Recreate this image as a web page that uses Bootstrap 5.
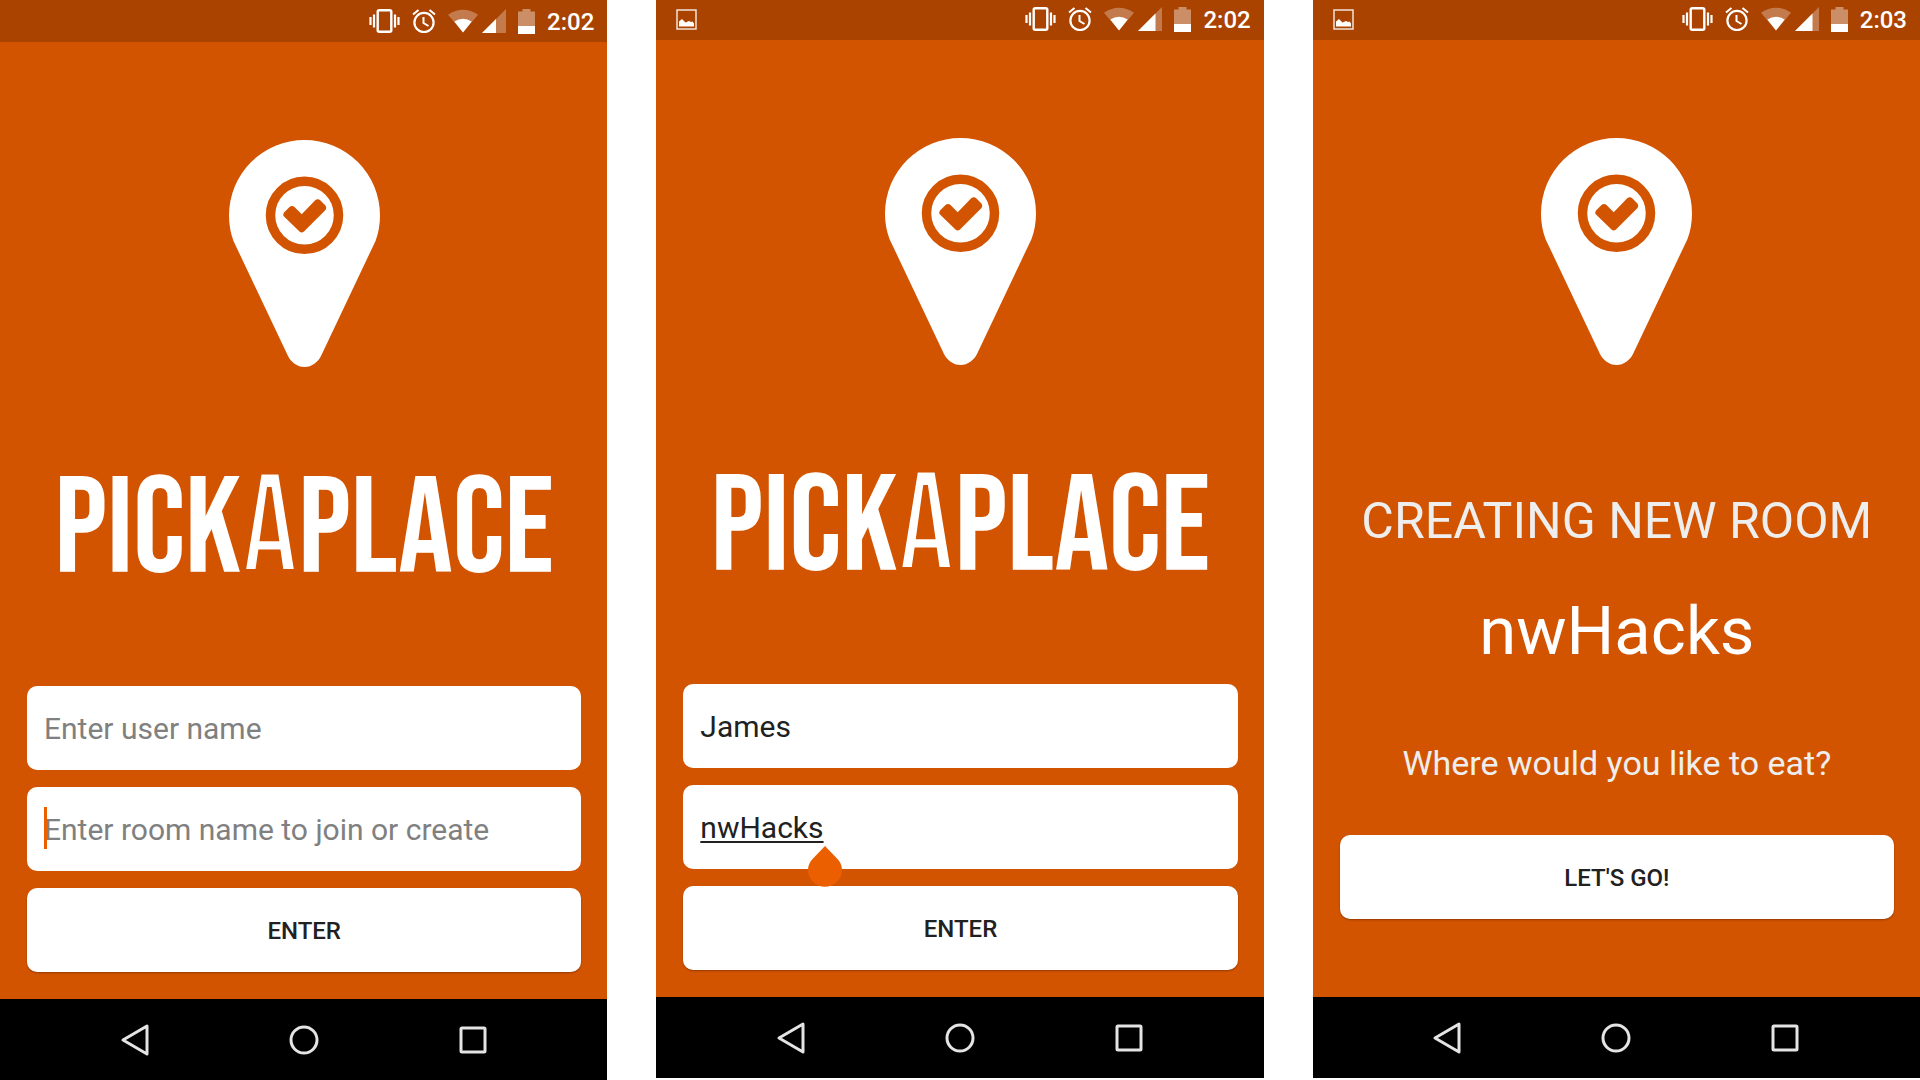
<!DOCTYPE html>
<html lang="en">
<head>
<meta charset="utf-8">
<meta name="viewport" content="width=device-width, initial-scale=1">
<title>PickAPlace</title>
<link href="https://cdn.jsdelivr.net/npm/bootstrap@5.3.0/dist/css/bootstrap.min.css" rel="stylesheet">
<style>
  body { font-family: Roboto, "Liberation Sans", sans-serif; background: #fff; }
  .gallery { gap: 49px; min-height: 100vh; }
  .phone { flex: 1 1 0; min-width: 0; background: #d35400; color: #fff; }
  .phone-raised { margin-top: -2px; margin-bottom: 2px; }
  .status-bar { height: 42px; padding: 0 13px 0 20px; background: #aa4300; font-size: 24px; line-height: 28px; font-weight: 500; }
  .status-bar svg { display: block; flex: none; }
  .status-icons { gap: 12px; }
  .clock { padding-top: 2px; }
  .screen { padding: 98px 26px 27px 27px; }
  .screen-room { padding-bottom: 78px; }
  .wordmark { font-family: "Bebas Neue", "Roboto Condensed", "Liberation Sans Narrow", Roboto, sans-serif; font-weight: 400; font-size: 136px; line-height: 140px; margin: 92px 0 0; white-space: nowrap; }
  .wordmark span { font-size: 142px; line-height: 1; -webkit-text-stroke: 5px #d35400; }
  .stack { gap: 17px; }
  .field, .action { height: 84px; border: 0; border-radius: 10px; background: #fff; color: #212121; }
  .field { padding: 0 17px; font-size: 30px; line-height: 40px; }
  .field:focus { color: #212121; box-shadow: none; }
  .field::placeholder { color: #808080; opacity: 1; }
  .composing { text-decoration: underline; text-decoration-thickness: 2px; text-underline-offset: 3px; }
  .action { padding: 8px 12px 6px; font-size: 24px; line-height: 28px; font-weight: 500; box-shadow: 0 1px 2px rgba(0, 0, 0, .3); }
  .action:hover { background: #fff; color: #212121; }
  .caret-bar { position: absolute; left: 17px; top: 20px; width: 3px; height: 42px; background: #ec5f00; }
  .drop-handle { position: absolute; left: 125px; top: 61px; z-index: 2; }
  .room-note { color: #eee; font-size: 50px; line-height: 60px; margin: 126px 0 0; }
  .room-title { font-size: 67px; line-height: 80px; font-weight: 400; margin: 40px 0 0; }
  .room-ask { color: #eee; font-size: 34px; line-height: 40px; margin: 0 0 52px; }
  .nav-bar { height: 81px; padding: 0 50px; background: #000; }
  .nav-bar button { flex: 1 1 0; height: 81px; padding: 0; border: 0; background: none; }
  .nav-bar svg { display: block; margin: 0 auto; }
</style>
</head>
<body>
<svg width="0" height="0" class="position-absolute" aria-hidden="true">
  <defs>
    <symbol id="i-picture" viewBox="0 0 21 21"><rect x="1" y="1" width="19" height="19" fill="none" stroke="#fff" stroke-opacity=".85" stroke-width="1.500"/><path d="M3 17.500v-5l3-2.500 3.500 3.500 3.500-1.500 2 1 1.500-.5 1.500 2v3z" fill="#fff"/></symbol>
    <symbol id="i-vibrate" viewBox="0 0 31 24"><rect x="8.700" y="1.200" width="13.600" height="21.600" rx="1.500" fill="none" stroke="#fff" stroke-width="2.400"/><path d="M1.500 8v8M5 5.500v13M26 5.500v13M29.500 8v8" stroke="#fff" stroke-width="2.200"/></symbol>
    <symbol id="i-alarm" viewBox="0 0 24 24"><circle cx="12" cy="13.500" r="9.600" fill="none" stroke="#fff" stroke-width="2.200"/><path d="M11.500 8v6l5 3M1 5.500L6.500 1M23 5.500L17.500 1" fill="none" stroke="#fff" stroke-width="2"/></symbol>
    <symbol id="i-wifi" viewBox="0 0 31 24"><path d="M15.500 24L0 5.500Q15.500-5 31 5.500z" fill="#fff" fill-opacity=".3"/><path d="M15.500 24L6.500 12.500Q15.500 7 24.500 12.500z" fill="#fff"/></symbol>
    <symbol id="i-signal-low" viewBox="0 0 24 24"><path d="M24 0v24H0z" fill="#fff" fill-opacity=".3"/><path d="M14 10v14H0z" fill="#fff"/></symbol>
    <symbol id="i-signal-high" viewBox="0 0 24 24"><path d="M24 0v24H0z" fill="#fff" fill-opacity=".3"/><path d="M17.500 6.500V24H0z" fill="#fff"/></symbol>
    <symbol id="i-battery" viewBox="0 0 17 25"><path d="M0 2.500h4.500V0h8v2.500H17V17H0z" fill="#fff" fill-opacity=".4"/><path d="M0 17h17v8H0z" fill="#fff"/></symbol>
    <symbol id="i-pin" viewBox="0 0 151 227"><path d="M75.500 0A75.500 75.500 0 0 0 0 75.500Q0 89 4.500 101L59 216C62 222 68 227 75.500 227S89 222 92 216L146.500 101Q151 89 151 75.500A75.500 75.500 0 0 0 75.500 0z" fill="#fff"/><circle cx="75.500" cy="75.300" r="34" fill="none" stroke="#d35400" stroke-width="9.500"/><path d="M55 72.500L60.500 67Q63 65 65.500 67L72.700 74.300L86 60.500Q88.700 58 91.500 60.500L96 65Q98.500 68 96 70.500L75 91.500Q72.700 93.500 70.500 91.500L55 76.500Q53.500 74.500 55 72.500z" fill="#d35400"/></symbol>
    <symbol id="i-back" viewBox="0 0 32 34"><path d="M28 3v28L4 17z" fill="none" stroke="#e4e4e4" stroke-width="3" stroke-linejoin="round"/></symbol>
    <symbol id="i-home" viewBox="0 0 32 34"><circle cx="16" cy="17" r="13" fill="none" stroke="#e4e4e4" stroke-width="3"/></symbol>
    <symbol id="i-recent" viewBox="0 0 32 34"><rect x="4" y="5" width="24" height="24" rx="1" fill="none" stroke="#e4e4e4" stroke-width="3"/></symbol>
  </defs>
</svg>

<main class="gallery d-flex">
  <section class="phone d-flex flex-column">
    <header class="status-bar d-flex align-items-center justify-content-end">
      <div class="status-icons d-flex align-items-center">
        <svg width="31" height="24"><use href="#i-vibrate"/></svg>
        <svg width="24" height="24"><use href="#i-alarm"/></svg>
        <div class="d-flex gap-1"><svg width="30" height="24"><use href="#i-wifi"/></svg><svg width="24" height="24"><use href="#i-signal-low"/></svg></div>
        <svg width="17" height="25"><use href="#i-battery"/></svg>
        <span class="clock">2:02</span>
      </div>
    </header>
    <div class="screen d-flex flex-column flex-grow-1 text-center">
      <svg class="mx-auto d-block flex-shrink-0" width="151" height="227"><use href="#i-pin"/></svg>
      <h1 class="wordmark">PICK<span>A</span>PLACE</h1>
      <form class="stack d-flex flex-column mt-auto">
        <input class="form-control field" type="text" aria-label="User name" placeholder="Enter user name">
        <div class="position-relative">
          <input class="form-control field" type="text" aria-label="Room name" placeholder="Enter room name to join or create">
          <span class="caret-bar"></span>
        </div>
        <button class="btn action w-100" type="button">ENTER</button>
      </form>
    </div>
    <nav class="nav-bar d-flex">
      <button type="button" aria-label="Back"><svg width="32" height="34"><use href="#i-back"/></svg></button>
      <button type="button" aria-label="Home"><svg width="32" height="34"><use href="#i-home"/></svg></button>
      <button type="button" aria-label="Recent apps"><svg width="32" height="34"><use href="#i-recent"/></svg></button>
    </nav>
  </section>

  <section class="phone phone-raised d-flex flex-column">
    <header class="status-bar d-flex align-items-center justify-content-between">
      <svg width="21" height="21"><use href="#i-picture"/></svg>
      <div class="status-icons d-flex align-items-center">
        <svg width="31" height="24"><use href="#i-vibrate"/></svg>
        <svg width="24" height="24"><use href="#i-alarm"/></svg>
        <div class="d-flex gap-1"><svg width="30" height="24"><use href="#i-wifi"/></svg><svg width="24" height="24"><use href="#i-signal-high"/></svg></div>
        <svg width="17" height="25"><use href="#i-battery"/></svg>
        <span class="clock">2:02</span>
      </div>
    </header>
    <div class="screen d-flex flex-column flex-grow-1 text-center">
      <svg class="mx-auto d-block flex-shrink-0" width="151" height="227"><use href="#i-pin"/></svg>
      <h1 class="wordmark">PICK<span>A</span>PLACE</h1>
      <form class="stack d-flex flex-column mt-auto">
        <input class="form-control field" type="text" aria-label="User name" value="James">
        <div class="position-relative">
          <input class="form-control field composing" type="text" aria-label="Room name" value="nwHacks" spellcheck="false">
          <svg class="drop-handle" width="34" height="41" viewBox="0 0 34 41"><path d="M17 0L29 12.500A17 16.500 0 1 1 5 12.500z" fill="#ec5f00"/></svg>
        </div>
        <button class="btn action w-100" type="button">ENTER</button>
      </form>
    </div>
    <nav class="nav-bar d-flex">
      <button type="button" aria-label="Back"><svg width="32" height="34"><use href="#i-back"/></svg></button>
      <button type="button" aria-label="Home"><svg width="32" height="34"><use href="#i-home"/></svg></button>
      <button type="button" aria-label="Recent apps"><svg width="32" height="34"><use href="#i-recent"/></svg></button>
    </nav>
  </section>

  <section class="phone phone-raised d-flex flex-column">
    <header class="status-bar d-flex align-items-center justify-content-between">
      <svg width="21" height="21"><use href="#i-picture"/></svg>
      <div class="status-icons d-flex align-items-center">
        <svg width="31" height="24"><use href="#i-vibrate"/></svg>
        <svg width="24" height="24"><use href="#i-alarm"/></svg>
        <div class="d-flex gap-1"><svg width="30" height="24"><use href="#i-wifi"/></svg><svg width="24" height="24"><use href="#i-signal-high"/></svg></div>
        <svg width="17" height="25"><use href="#i-battery"/></svg>
        <span class="clock">2:03</span>
      </div>
    </header>
    <div class="screen screen-room d-flex flex-column flex-grow-1 text-center">
      <svg class="mx-auto d-block flex-shrink-0" width="151" height="227"><use href="#i-pin"/></svg>
      <p class="room-note text-nowrap">CREATING NEW ROOM</p>
      <h2 class="room-title">nwHacks</h2>
      <div class="mt-auto">
        <p class="room-ask">Where would you like to eat?</p>
        <button class="btn action w-100" type="button">LET'S GO!</button>
      </div>
    </div>
    <nav class="nav-bar d-flex">
      <button type="button" aria-label="Back"><svg width="32" height="34"><use href="#i-back"/></svg></button>
      <button type="button" aria-label="Home"><svg width="32" height="34"><use href="#i-home"/></svg></button>
      <button type="button" aria-label="Recent apps"><svg width="32" height="34"><use href="#i-recent"/></svg></button>
    </nav>
  </section>
</main>
<script src="https://cdn.jsdelivr.net/npm/bootstrap@5.3.0/dist/js/bootstrap.bundle.min.js"></script>
</body>
</html>
